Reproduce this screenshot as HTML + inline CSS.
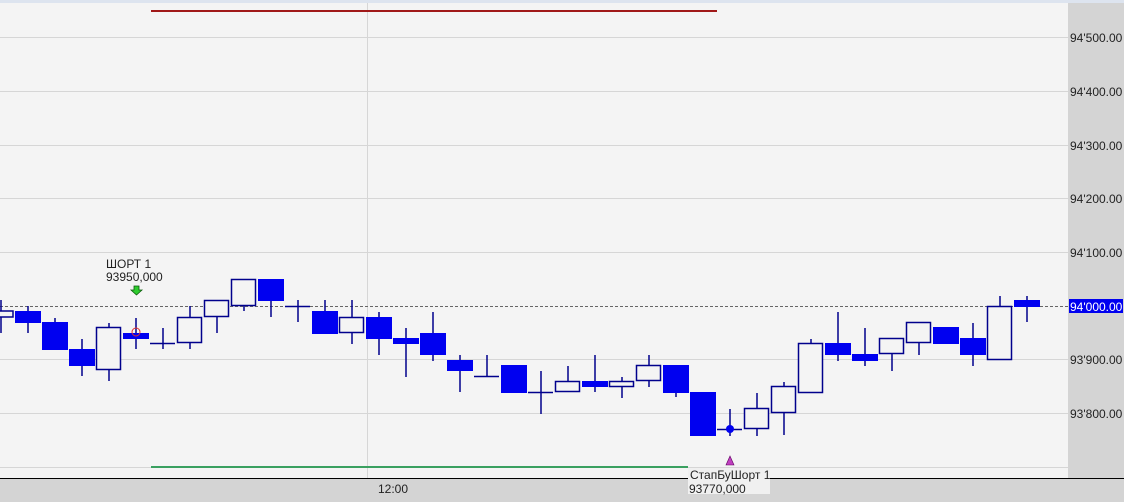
<!DOCTYPE html>
<html><head><meta charset="utf-8"><style>
html,body{margin:0;padding:0;background:#fff;}
svg{display:block;font-family:"Liberation Sans","DejaVu Sans",sans-serif;}
</style></head><body>
<svg width="1126" height="502" viewBox="0 0 1126 502" xmlns="http://www.w3.org/2000/svg">
<rect x="0" y="0" width="1126" height="502" fill="#fff"/>
<rect x="0" y="0" width="1124" height="478" fill="#f4f4f4"/>
<rect x="0" y="0" width="1124" height="3" fill="#dde4ef"/>
<rect x="1068" y="3" width="56" height="475" fill="#d4d4d4"/>
<rect x="0" y="479" width="1124" height="23" fill="#d4d4d4"/>
<line x1="0" y1="478.5" x2="1124" y2="478.5" stroke="#000"/>
<defs><clipPath id="ax"><rect x="1068" y="0" width="55" height="478"/></clipPath></defs>
<g stroke="#d6d6d6" stroke-width="1">
<line x1="0" y1="37.5" x2="1068" y2="37.5"/>
<line x1="0" y1="91.5" x2="1068" y2="91.5"/>
<line x1="0" y1="145.5" x2="1068" y2="145.5"/>
<line x1="0" y1="198.5" x2="1068" y2="198.5"/>
<line x1="0" y1="252.5" x2="1068" y2="252.5"/>
<line x1="0" y1="359.5" x2="1068" y2="359.5"/>
<line x1="0" y1="413.5" x2="1068" y2="413.5"/>
<line x1="0" y1="467.5" x2="1068" y2="467.5"/>
<line x1="367.5" y1="3" x2="367.5" y2="478"/>
</g>
<line x1="0" y1="306.5" x2="1068" y2="306.5" stroke="#666" stroke-dasharray="3,2"/>
<line x1="151" y1="11" x2="717" y2="11" stroke="#a01818" stroke-width="2"/>
<line x1="151" y1="467" x2="688" y2="467" stroke="#3aa060" stroke-width="2"/>
<g font-size="12" fill="#222" clip-path="url(#ax)">
<text x="1070" y="42">94'500.00</text>
<text x="1070" y="96">94'400.00</text>
<text x="1070" y="150">94'300.00</text>
<text x="1070" y="203">94'200.00</text>
<text x="1070" y="257">94'100.00</text>
<text x="1070" y="364">93'900.00</text>
<text x="1070" y="418">93'800.00</text>
<rect x="1069" y="299" width="55" height="14" fill="#0000f0"/>
<text x="1070" y="311" fill="#fff">94'000.00</text>
</g>
<text x="378" y="493" font-size="12" fill="#222">12:00</text>
<rect x="688" y="468" width="82" height="26" fill="#f0f0f0"/>
<text x="690" y="479" font-size="12" fill="#222">СтапБуШорт 1</text>
<text x="689" y="493" font-size="12" fill="#222">93770,000</text>
<text x="106" y="268" font-size="12" fill="#222">ШОРТ 1</text>
<text x="106" y="281" font-size="12" fill="#222">93950,000</text>
<path d="M134 286h5v4h3l-5.5 5-5.5-5h3z" fill="#2ecc2e" stroke="#0a5a0a" stroke-width="0.8"/>
<path d="M730 456l4 9h-8z" fill="#c040c0" stroke="#600060" stroke-width="0.6"/>
<g stroke="#00008c" stroke-width="1.5" fill="none">
<path d="M1 300V333M28 306V333M55 318V349M82 339V376M109 323V381M136 318V349M163 328V349M190 306V349M217 300V333M244 279V311M271 279V317M298 300V322M325 300V333M352 300V344M379 312V355M406 328V377M433 312V361M460 355V392M487 355V376M514 365V392M541 371V414M568 366V392M595 355V392M622 377V398M649 355V387M676 365V397M703 392V436M730 409V436M757 393V436M784 382V435M811 339V392M838 312V361M865 328V366M892 338V371M919 322V355M946 327V343M973 323V366M1000 296V360M1027 296V322"/>
<path d="M150 343.5H175M474 376.5H499M528 392.5H553M717 429.5H742M285 306.5H310"/>
</g>
<g stroke="#00008c" stroke-width="1.5" fill="#f4f4f4">
<rect x="-2" y="311" width="15" height="6"/>
<rect x="96.5" y="327.5" width="24" height="42"/>
<rect x="177.5" y="317.5" width="24" height="25"/>
<rect x="204.5" y="300.5" width="24" height="16"/>
<rect x="231.5" y="279.5" width="24" height="26"/>
<rect x="339.5" y="317.5" width="24" height="15"/>
<rect x="555.5" y="381.5" width="24" height="10"/>
<rect x="609.5" y="381.5" width="24" height="5"/>
<rect x="636.5" y="365.5" width="24" height="15"/>
<rect x="744.5" y="408.5" width="24" height="20"/>
<rect x="771.5" y="386.5" width="24" height="26"/>
<rect x="798.5" y="343.5" width="24" height="49"/>
<rect x="879.5" y="338.5" width="24" height="15"/>
<rect x="906.5" y="322.5" width="24" height="20"/>
<rect x="987.5" y="306.5" width="24" height="53"/>
</g>
<g fill="#0000f0">
<rect x="15" y="311" width="26" height="12"/>
<rect x="42" y="322" width="26" height="28"/>
<rect x="69" y="349" width="26" height="17"/>
<rect x="123" y="333" width="26" height="6"/>
<rect x="258" y="279" width="26" height="22"/>
<rect x="312" y="311" width="26" height="23"/>
<rect x="366" y="317" width="26" height="22"/>
<rect x="393" y="338" width="26" height="6"/>
<rect x="420" y="333" width="26" height="22"/>
<rect x="447" y="360" width="26" height="11"/>
<rect x="501" y="365" width="26" height="28"/>
<rect x="582" y="381" width="26" height="6"/>
<rect x="663" y="365" width="26" height="28"/>
<rect x="690" y="392" width="26" height="44"/>
<rect x="825" y="343" width="26" height="12"/>
<rect x="852" y="354" width="26" height="7"/>
<rect x="933" y="327" width="26" height="17"/>
<rect x="960" y="338" width="26" height="17"/>
<rect x="1014" y="300" width="26" height="7"/>
</g>
<circle cx="136" cy="332" r="4" fill="none" stroke="#e03030" stroke-width="1"/>
<circle cx="730" cy="429" r="4" fill="#0000f0"/>
</svg>
</body></html>
